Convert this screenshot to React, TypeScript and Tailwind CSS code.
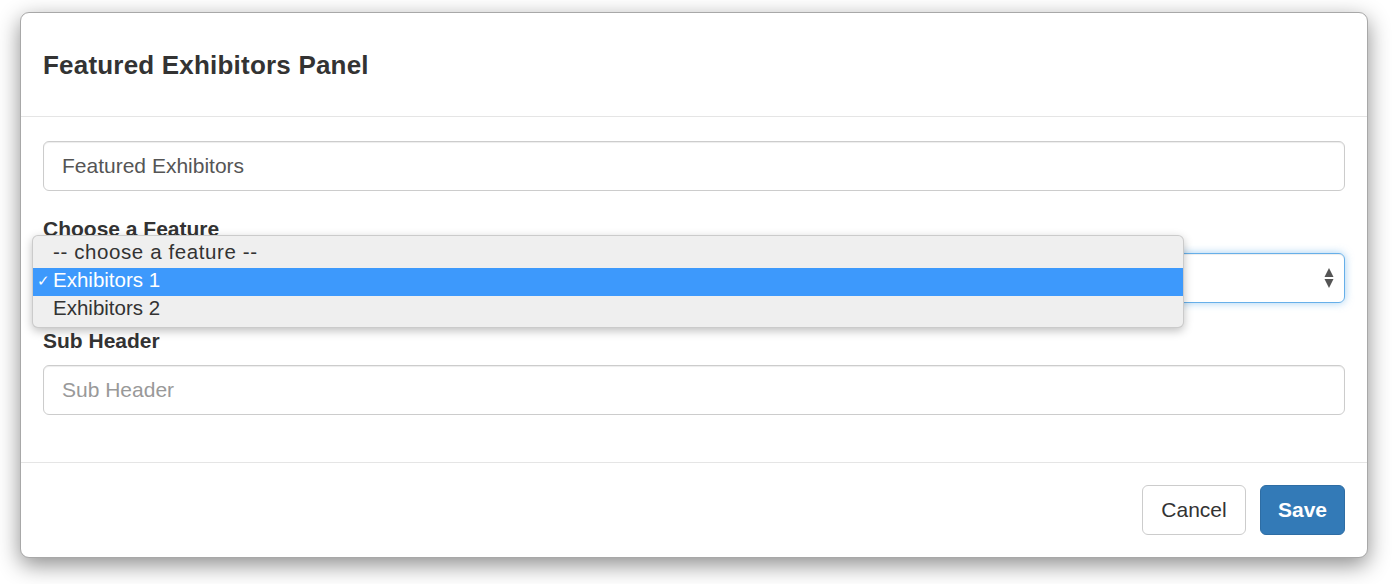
import React from "react";

const font = { fontFamily: '"Liberation Sans", Arial, Helvetica, sans-serif' };

export default function App() {
  return (
    <div
      className="relative w-[1392px] h-[584px] bg-white pt-[12px] pl-[20px] overflow-hidden"
      style={font}
    >
      <div className="w-[1348px] bg-white border border-[#a8a8a8] rounded-[9px] shadow-[0_7px_22px_rgba(0,0,0,0.45)]">
        {/* Header */}
        <div className="h-[104px] border-b border-[#e5e5e5] flex items-center px-[22px]">
          <h4 className="text-[26px] font-bold text-[#333] leading-none tracking-[0.2px]">
            Featured Exhibitors Panel
          </h4>
        </div>

        {/* Body */}
        <div className="px-[22px] pt-[24px] pb-[47px]">
          <div className="h-[50px] border border-[#cccccc] rounded-[6px] flex items-center pl-[18px] text-[21px] text-[#555] shadow-[inset_0_1px_1px_rgba(0,0,0,0.075)]">
            Featured Exhibitors
          </div>

          <div className="mt-[22px] h-[31px] leading-[31px] text-[21px] font-bold text-[#333]">
            Choose a Feature
          </div>
          <div className="mt-[9px] h-[50px] border border-[#66afe9] rounded-[6px] flex items-center justify-end pl-[18px] pr-[10px] text-[21px] text-[#555] shadow-[inset_0_1px_1px_rgba(0,0,0,0.075),0_0_8px_rgba(102,175,233,0.6)]">
            <svg width="10" height="20" viewBox="0 0 10 20">
              <polygon points="5,0 9.5,9 0.5,9" fill="#555" />
              <polygon points="0.5,11 9.5,11 5,20" fill="#555" />
            </svg>
          </div>

          <div className="mt-[22px] h-[31px] leading-[31px] text-[21px] font-bold text-[#333]">
            Sub Header
          </div>
          <div className="mt-[9px] h-[50px] border border-[#cccccc] rounded-[6px] flex items-center pl-[18px] text-[21px] text-[#999] shadow-[inset_0_1px_1px_rgba(0,0,0,0.075)]">
            Sub Header
          </div>
        </div>

        {/* Footer */}
        <div className="border-t border-[#e5e5e5] px-[22px] pt-[22px] pb-[22px] flex justify-end gap-[14px]">
          <button className="h-[50px] w-[104px] border border-[#cccccc] rounded-[6px] bg-white text-[21px] text-[#333]">
            Cancel
          </button>
          <button className="h-[50px] w-[85px] border border-[#2e6da4] rounded-[6px] bg-[#337ab7] text-[21px] font-bold text-white">
            Save
          </button>
        </div>
      </div>

      {/* Native select dropdown overlay */}
      <div className="absolute left-[32px] top-[235px] w-[1152px] h-[93px] bg-[#efefef] rounded-[6px] border border-[rgba(0,0,0,0.15)] shadow-[0_3px_10px_rgba(0,0,0,0.25)] pt-[4px] text-[20.5px] text-[#333]">
        <div className="h-[28px] flex items-center pl-[20px] pb-[3px] tracking-[0.6px]">
          -- choose a feature --
        </div>
        <div className="h-[28px] flex items-center bg-[#3d99fc] text-white pb-[3px]">
          <span className="w-[20px] pl-[4px] text-[15px] leading-none">✓</span>
          <span>Exhibitors 1</span>
        </div>
        <div className="h-[28px] flex items-center pl-[20px] pb-[3px]">Exhibitors 2</div>
      </div>
    </div>
  );
}
